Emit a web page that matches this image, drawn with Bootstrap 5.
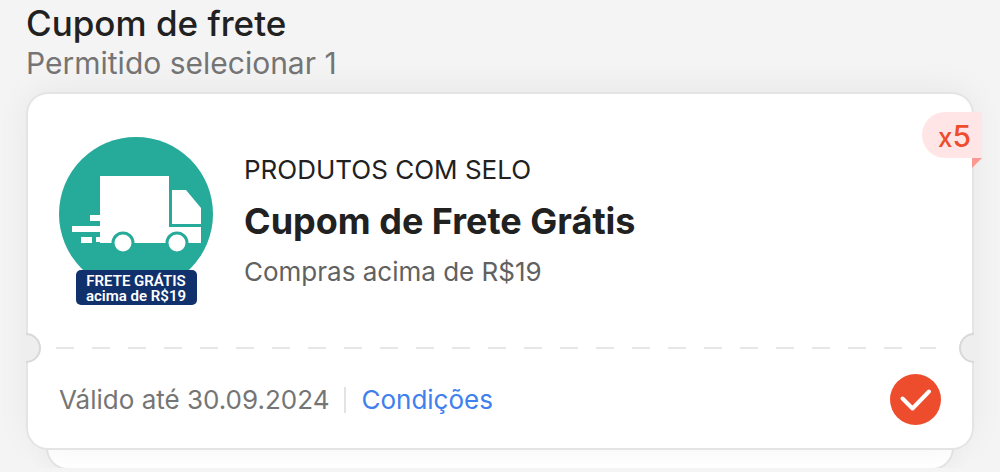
<!DOCTYPE html>
<html lang="pt-BR">
<head>
<meta charset="utf-8">
<meta name="viewport" content="width=device-width, initial-scale=1">
<title>Cupom de frete</title>
<link href="https://cdn.jsdelivr.net/npm/bootstrap@5.3.0/dist/css/bootstrap.min.css" rel="stylesheet">
<style>
  body { font-family: Inter, "Liberation Sans", sans-serif; background: #f4f4f4; color: #212121; overflow: hidden; }
  .page { padding: 3px 26px 0; }
  .page-title { font-size: 35px; line-height: 40px; font-weight: 500; }
  .page-note { font-size: 30px; line-height: 40px; color: #757575; }
  .coupon { margin: 11px 2px 0; border-radius: 20px; z-index: 1; box-shadow: 0 0 0 2px #e4e4e4, 0 -4px 36px rgba(0,0,0,.06); }
  .coupon-main { padding: 43px 31px 40px; gap: 31px; }
  .seal { width: 154px; height: 170px; font-family: Roboto, sans-serif; font-weight: 600; }
  .coupon-text { gap: 13px; padding-top: 17px; }
  .kicker { font-size: 26px; line-height: 32px; }
  .coupon-title { font-size: 36px; line-height: 44px; font-weight: 700; }
  .rule-text { font-size: 26px; line-height: 32px; color: #616161; }
  .perforation { height: 2px; margin: 0 36px 0 28px; background: repeating-linear-gradient(90deg, #e6e6e6 0 18px, transparent 18px 36px); }
  .notch { width: 15px; height: 30px; background: #eee; border: 2px solid #d8d8d8; top: -14px; }
  .notch-start { left: -2px; border-left: 0; border-radius: 0 15px 15px 0; }
  .notch-end { right: -2px; border-right: 0; border-radius: 15px 0 0 15px; }
  .coupon-foot { padding: 25px 31px 23px; font-size: 26px; line-height: 32px; color: #757575; }
  .divider { width: 2px; height: 26px; background: #e3e3e3; margin: 0 15px; }
  .terms { color: #4080ee; }
  .pick { width: 51px; height: 51px; margin: 0; border: 0; border-radius: 50% !important; }
  .pick:checked { background-color: #ee4d2d; background-size: 100%;
    background-image: url("data:image/svg+xml,%3Csvg xmlns='http://www.w3.org/2000/svg' viewBox='0 0 51 51'%3E%3Cpath d='M12.5 24.5 22.5 34.5 39 17.5' fill='none' stroke='%23fff' stroke-width='4' stroke-linecap='round' stroke-linejoin='round'/%3E%3C/svg%3E"); }
  .count { top: 18px; right: -10px; padding: 0 11px 0 16px; border-radius: 23px 0 0 23px; background: #ffe5e5; color: #ee4d2d; font-size: 30px; line-height: 48px; height: 46px; font-weight: 500; }
  .count .times { font-size: 26px; }
  .count::after { content: ""; position: absolute; top: 100%; right: 0; width: 10px; height: 10px; background: #fb9a92; clip-path: polygon(0 0, 100% 0, 0 100%); }
  .stacked { height: 40px; margin: -20px 22px 0; border-radius: 20px; box-shadow: 0 0 0 2px #e4e4e4, 0 0 30px rgba(0,0,0,.05); }
</style>
</head>
<body>
<main class="page">
  <header>
    <h1 class="page-title m-0">Cupom de frete</h1>
    <p class="page-note m-0">Permitido selecionar 1</p>
  </header>

  <article class="coupon bg-white position-relative">
    <div class="coupon-main d-flex align-items-start">
      <svg class="seal flex-shrink-0" viewBox="0 0 154 170" role="img" aria-label="Frete grátis acima de R$19">
        <circle cx="77" cy="77" r="77" fill="#26aa99"/>
        <!-- truck body, cab and speed lines -->
        <g fill="#fff">
          <path d="M41 39H110V90H142V106H41V105H37V100H41V95H13V89H41V84H31V78H41Z"/>
          <path d="M22 100H33V106H22Z"/>
          <path d="M113 53H127L142 71V87H113Z"/>
        </g>
        <g fill="#fff" stroke="#26aa99" stroke-width="3">
          <circle cx="64" cy="106" r="10"/>
          <circle cx="118" cy="106" r="10"/>
        </g>
        <rect x="17" y="133" width="121" height="35" rx="5" fill="#10316b"/>
        <g fill="#fff" font-size="15" text-anchor="middle">
          <text x="77" y="149">FRETE GRÁTIS</text>
          <text x="77" y="164">acima de R$19</text>
        </g>
      </svg>
      <div class="coupon-text d-flex flex-column">
        <div class="kicker">PRODUTOS COM SELO</div>
        <h2 class="coupon-title m-0"><label for="coupon">Cupom de Frete Grátis</label></h2>
        <div class="rule-text">Compras acima de R$19</div>
      </div>
    </div>
    <div class="position-relative">
      <span class="notch notch-start position-absolute"></span>
      <div class="perforation"></div>
      <span class="notch notch-end position-absolute"></span>
    </div>
    <div class="coupon-foot d-flex align-items-center">
      <span>Válido até 30.09.2024</span>
      <span class="divider"></span>
      <a class="terms text-decoration-none" href="#">Condições</a>
      <input class="pick form-check-input ms-auto" type="checkbox" id="coupon" checked>
    </div>
    <div class="count position-absolute"><span class="times">x</span>5</div>
  </article>
  <div class="stacked bg-white"></div>
</main>
<script src="https://cdn.jsdelivr.net/npm/bootstrap@5.3.0/dist/js/bootstrap.bundle.min.js"></script>
</body>
</html>
